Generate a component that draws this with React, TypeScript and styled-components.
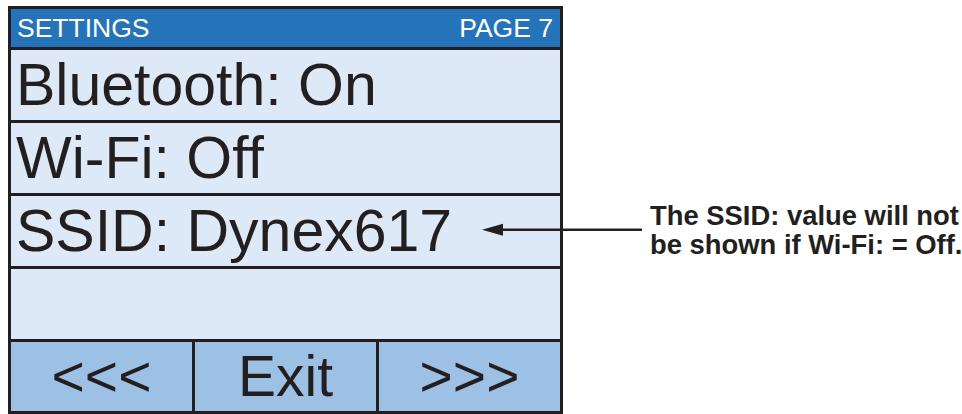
import React from 'react';
import styled, { createGlobalStyle } from 'styled-components';

const ink = '#231f20';

const GlobalStyle = createGlobalStyle`
  html, body {
    margin: 0;
    background: #ffffff;
  }
  body {
    font-family: "Liberation Sans", Arial, Helvetica, sans-serif;
    color: ${ink};
  }
`;

const Page = styled.div({
  display: 'flex',
  alignItems: 'flex-start',
  padding: '6px 0 0 8px',
  width: 962,
  height: 414,
  boxSizing: 'border-box',
});

const Panel = styled.div({
  width: 555,
  boxSizing: 'border-box',
  border: `3px solid ${ink}`,
  background: ink,
  display: 'grid',
  gridTemplateRows: '38px 70px 70px 70px 70px 69px',
  rowGap: 3,
});

const Header = styled.div({
  background: '#2574b9',
  color: '#ffffff',
  display: 'flex',
  alignItems: 'center',
  justifyContent: 'space-between',
  padding: '0 7px 0 6px',
  fontSize: 26.5,
  lineHeight: 1,
});

const Row = styled.div({
  position: 'relative',
  background: '#dde9f6',
  display: 'flex',
  alignItems: 'center',
  padding: '0 0 0 5px',
  fontSize: 59,
  lineHeight: 1,
  whiteSpace: 'nowrap',
});

const ButtonBar = styled.div({
  display: 'grid',
  gridTemplateColumns: 'repeat(3, 1fr)',
  columnGap: 3,
});

const SoftKey = styled.div({
  background: '#9dc1e5',
  display: 'flex',
  alignItems: 'center',
  justifyContent: 'center',
  fontSize: 57,
  lineHeight: 1,
});

// the callout sits over the panel edge, pointing at the SSID row
const Callout = styled.div({
  position: 'absolute',
  left: 471,
  top: '50%',
  transform: 'translateY(-52%)',
  display: 'flex',
  alignItems: 'center',
  gap: 8,
});

const Note = styled.div({
  fontSize: 27.4,
  fontWeight: 700,
  lineHeight: '29px',
  whiteSpace: 'nowrap',
  color: ink,
});

const Arrow: React.FC = () => (
  <svg width={160} height={14} viewBox="0 0 160 14">
    <line x1={16} y1={7} x2={160} y2={7} stroke={ink} strokeWidth={2.5} />
    <polygon points="0,7 21,1 21,13" fill={ink} />
  </svg>
);

const rows = ['Bluetooth: On', 'Wi-Fi: Off', 'SSID: Dynex617'];

const App: React.FC = () => (
  <>
    <GlobalStyle />
    <Page>
      <Panel>
        <Header>
          <span>SETTINGS</span>
          <span>PAGE 7</span>
        </Header>
        {rows.map((label) => (
          <Row key={label}>
            {label}
            {label.startsWith('SSID') && (
              <Callout>
                <Arrow />
                <Note>
                  The SSID: value will not
                  <br />
                  be shown if Wi-Fi: = Off.
                </Note>
              </Callout>
            )}
          </Row>
        ))}
        <Row />
        <ButtonBar>
          <SoftKey>&lt;&lt;&lt;</SoftKey>
          <SoftKey>Exit</SoftKey>
          <SoftKey>&gt;&gt;&gt;</SoftKey>
        </ButtonBar>
      </Panel>
    </Page>
  </>
);

export default App;
